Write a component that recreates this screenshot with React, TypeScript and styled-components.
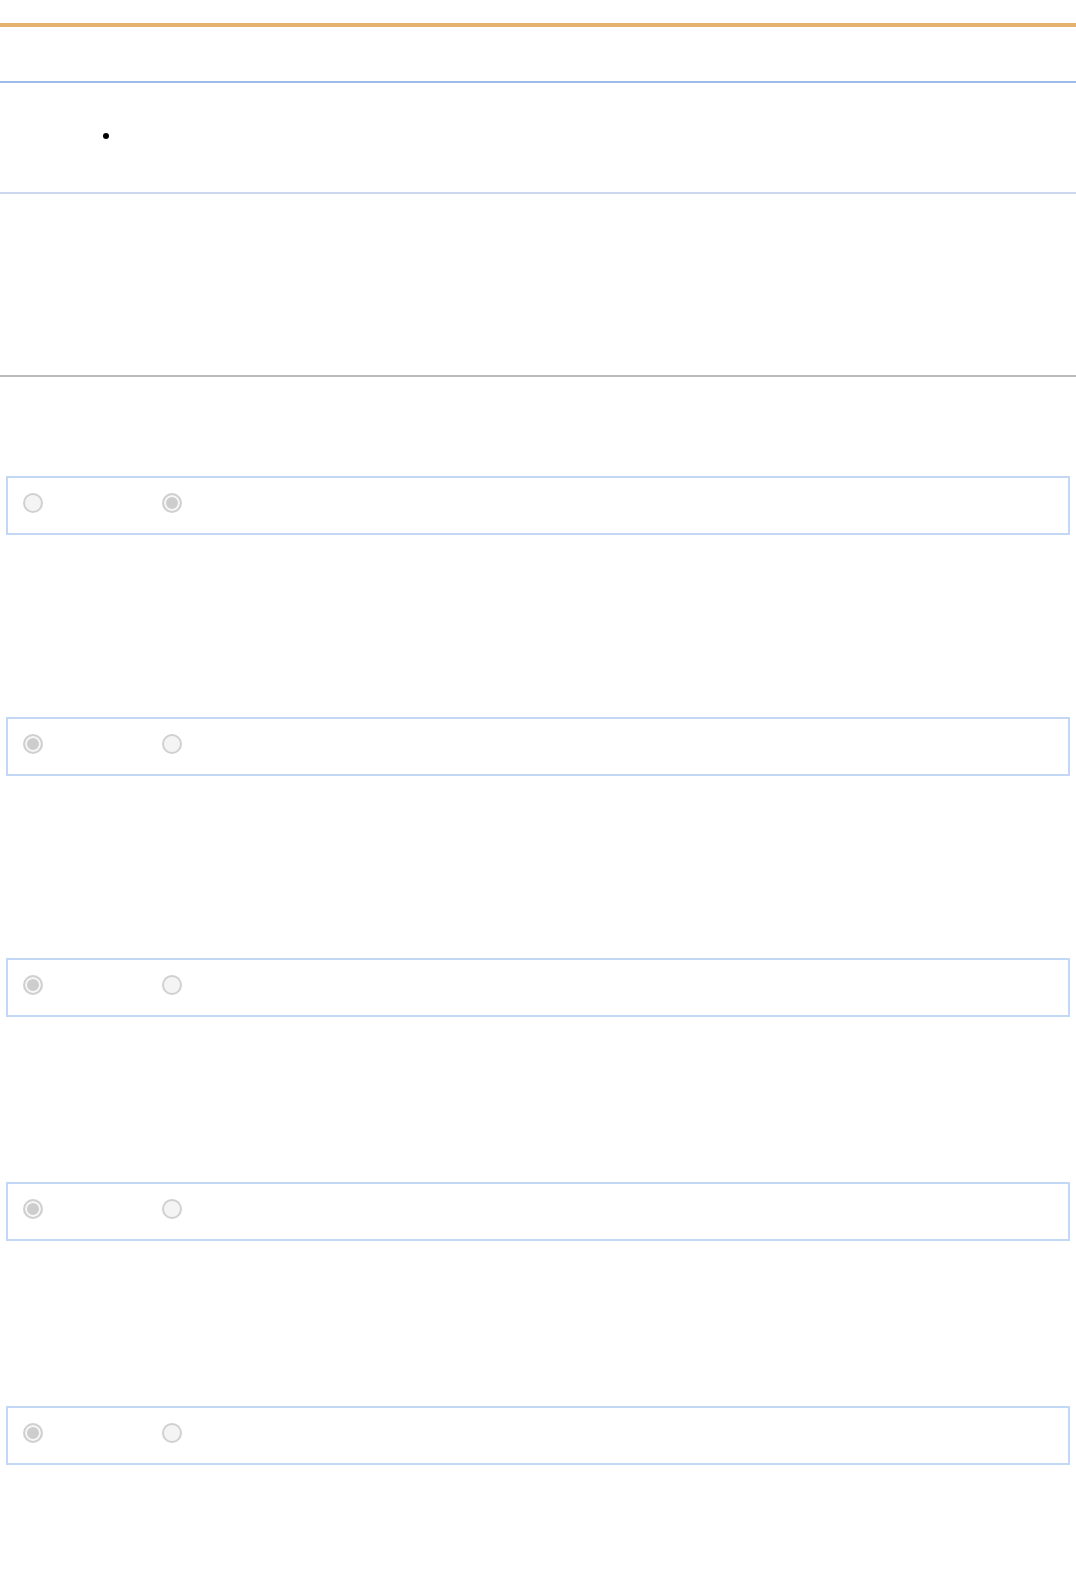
import React from 'react'
import styled, { createGlobalStyle } from 'styled-components'

const GlobalStyle = createGlobalStyle`
  html, body {
    margin: 0;
    padding: 0;
    background: #ffffff;
    font-family: "Liberation Sans", Arial, sans-serif;
  }
`;

const Page = styled.div`
  width: 1076px;
  min-height: 1570px;
  padding-top: 23px;
  box-sizing: border-box;
`;

const TopBar = styled.header`
  height: 54px;
  border-top: 4px solid #e5b36f;
  border-bottom: 2px solid #9dbde6;
`;

const ListSection = styled.section`
  padding: 50px 0 53px 103px;
  border-bottom: 2px solid #cbd8ee;
`;

const Dot = styled.span`
  display: block;
  width: 6px;
  height: 6px;
  border-radius: 50%;
  background: #000;
`;

const EmptySection = styled.section`
  height: 181px;
  border-bottom: 2px solid #bbbbbb;
`;

const Groups = styled.div`
  display: flex;
  flex-direction: column;
  padding: 0 6px;
`;

const Group = styled.div<{ $gap: number }>`
  margin-top: ${p => p.$gap}px;
  border: 2px solid #c3d8f4;
  display: flex;
  align-items: flex-start;
  padding: 15px 0 0 15px;
  height: 40px;
`;

const Option = styled.label`
  display: flex;
  align-items: center;
  width: 139px;
`;

const Radio = styled.span<{ $checked?: boolean }>`
  display: block;
  width: 20px;
  height: 20px;
  box-sizing: border-box;
  border-radius: 50%;
  border: 2px solid #d0d0d0;
  background: ${p => (p.$checked ? '#cdcdcd' : '#f4f4f4')};
  box-shadow: ${p => (p.$checked ? 'inset 0 0 0 2px #f7f7f7' : 'none')};
`;

const groups = [
  { gap: 99, checked: 1 },
  { gap: 182, checked: 0 },
  { gap: 182, checked: 0 },
  { gap: 165, checked: 0 },
  { gap: 165, checked: 0 },
];

const App = () => {
  return (
    <Page>
      <GlobalStyle />
      <TopBar />
      <ListSection>
        <Dot />
      </ListSection>
      <EmptySection />
      <Groups>
        {groups.map((g, i) => (
          <Group key={i} $gap={g.gap}>
            <Option>
              <Radio $checked={g.checked === 0} />
            </Option>
            <Option>
              <Radio $checked={g.checked === 1} />
            </Option>
          </Group>
        ))}
      </Groups>
    </Page>
  )
}

export default App
